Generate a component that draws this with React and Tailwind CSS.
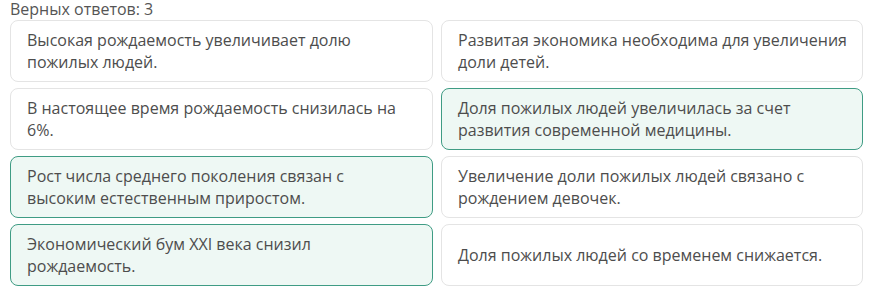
export default function App() {
  const rows = [
    [
      { t: "Высокая рождаемость увеличивает долю пожилых людей.", g: false },
      { t: "Развитая экономика необходима для увеличения доли детей.", g: false },
    ],
    [
      { t: "В настоящее время рождаемость снизилась на 6%.", g: false },
      { t: "Доля пожилых людей увеличилась за счет развития современной медицины.", g: true },
    ],
    [
      { t: "Рост числа среднего поколения связан с высоким естественным приростом.", g: true },
      { t: "Увеличение доли пожилых людей связано с рождением девочек.", g: false },
    ],
    [
      { t: "Экономический бум XXI века снизил рождаемость.", g: true },
      { t: "Доля пожилых людей со временем снижается.", g: false },
    ],
  ];
  return (
    <div
      className="w-[882px] h-[296px] bg-white text-[#4d4d4d] overflow-hidden"
      style={{ fontFamily: '"Open Sans", "Noto Sans", sans-serif' }}
    >
      <div className="pl-[10px] h-[20px] text-[16px] leading-[18px] text-[#555]">
        Верных ответов: 3
      </div>
      <div className="pl-[10px] grid grid-cols-[423px_422px] gap-x-[8px] gap-y-[6px]">
        {rows.flat().map((c, i) => (
          <div
            key={i}
            className={
              "h-[62px] rounded-[8px] border flex items-center pl-[16px] text-[16px] leading-[22px] " +
              (i % 2 === 0 ? "pr-[26px] " : "pr-[10px] ") +
              (c.g
                ? "border-[#3f9c84] bg-[#eef8f4]"
                : "border-[#e4e4e4] bg-white")
            }
          >
            <span>{c.t}</span>
          </div>
        ))}
      </div>
    </div>
  );
}
